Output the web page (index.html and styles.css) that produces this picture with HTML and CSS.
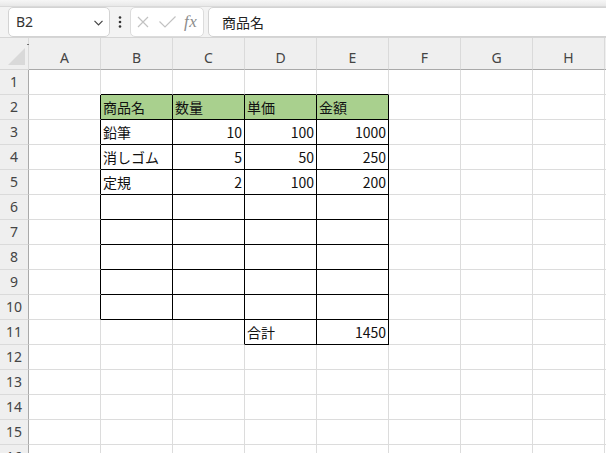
FILE: index.html
```html
<!DOCTYPE html>
<html lang="ja">
<head>
<meta charset="utf-8">
<title>Sheet</title>
<link rel="stylesheet" href="styles.css">
</head>
<body>
<div class="app">
  <div class="topstrip"></div>
  <div class="fbar">
    <div class="namebox">
      <span class="ref">B2</span>
      <svg class="chev" width="9" height="6" viewBox="0 0 9 6"><polyline points="0.5,0.8 4.5,4.8 8.5,0.8" fill="none" stroke="#444" stroke-width="1.2"/></svg>
    </div>
    <div class="dots">
      <svg width="4" height="12" viewBox="0 0 4 12"><circle cx="2" cy="1.5" r="1.3" fill="#333"/><circle cx="2" cy="6" r="1.3" fill="#333"/><circle cx="2" cy="10.5" r="1.3" fill="#333"/></svg>
    </div>
    <div class="fxbox">
      <svg class="ico-x" width="12" height="12" viewBox="0 0 12 12"><path d="M1 1 L11 11 M11 1 L1 11" stroke="#c2c2c2" stroke-width="1.2" fill="none"/></svg>
      <svg class="ico-ok" width="17" height="12" viewBox="0 0 17 12"><polyline points="0.5,5.5 6,11 16.5,0.5" fill="none" stroke="#c2c2c2" stroke-width="1.2"/></svg>
      <span class="fx">fx</span>
    </div>
    <div class="finput">商品名</div>
  </div>
  <div class="sheet">
    <div class="corner"><svg width="28" height="31" viewBox="0 0 28 31"><polygon points="8,27 25,10 25,27" fill="#d9d9d9"/><rect x="27.5" y="6" width="1" height="1" fill="#000"/></svg></div>
    <div class="ch">A</div><div class="ch">B</div><div class="ch">C</div><div class="ch">D</div><div class="ch">E</div><div class="ch">F</div><div class="ch">G</div><div class="ch">H</div><div class="ch"></div>

    <div class="rh">1</div>
    <div class="c"></div><div class="c bb"></div><div class="c bb"></div><div class="c bb"></div><div class="c bb"></div><div class="c"></div><div class="c"></div><div class="c"></div><div class="c"></div>

    <div class="rh">2</div>
    <div class="c br"></div><div class="c h br bb t">商品名</div><div class="c h br bb t">数量</div><div class="c h br bb t">単価</div><div class="c h br bb t">金額</div><div class="c"></div><div class="c"></div><div class="c"></div><div class="c"></div>

    <div class="rh">3</div>
    <div class="c br"></div><div class="c br bb t">鉛筆</div><div class="c br bb n">10</div><div class="c br bb n">100</div><div class="c br bb n">1000</div><div class="c"></div><div class="c"></div><div class="c"></div><div class="c"></div>

    <div class="rh">4</div>
    <div class="c br"></div><div class="c br bb t">消しゴム</div><div class="c br bb n">5</div><div class="c br bb n">50</div><div class="c br bb n">250</div><div class="c"></div><div class="c"></div><div class="c"></div><div class="c"></div>

    <div class="rh">5</div>
    <div class="c br"></div><div class="c br bb t">定規</div><div class="c br bb n">2</div><div class="c br bb n">100</div><div class="c br bb n">200</div><div class="c"></div><div class="c"></div><div class="c"></div><div class="c"></div>

    <div class="rh">6</div>
    <div class="c br"></div><div class="c br bb"></div><div class="c br bb"></div><div class="c br bb"></div><div class="c br bb"></div><div class="c"></div><div class="c"></div><div class="c"></div><div class="c"></div>

    <div class="rh">7</div>
    <div class="c br"></div><div class="c br bb"></div><div class="c br bb"></div><div class="c br bb"></div><div class="c br bb"></div><div class="c"></div><div class="c"></div><div class="c"></div><div class="c"></div>

    <div class="rh">8</div>
    <div class="c br"></div><div class="c br bb"></div><div class="c br bb"></div><div class="c br bb"></div><div class="c br bb"></div><div class="c"></div><div class="c"></div><div class="c"></div><div class="c"></div>

    <div class="rh">9</div>
    <div class="c br"></div><div class="c br bb"></div><div class="c br bb"></div><div class="c br bb"></div><div class="c br bb"></div><div class="c"></div><div class="c"></div><div class="c"></div><div class="c"></div>

    <div class="rh">10</div>
    <div class="c br"></div><div class="c br bb"></div><div class="c br bb"></div><div class="c br bb"></div><div class="c br bb"></div><div class="c"></div><div class="c"></div><div class="c"></div><div class="c"></div>

    <div class="rh">11</div>
    <div class="c"></div><div class="c"></div><div class="c br"></div><div class="c br bb t">合計</div><div class="c br bb n">1450</div><div class="c"></div><div class="c"></div><div class="c"></div><div class="c"></div>

    <div class="rh">12</div>
    <div class="c"></div><div class="c"></div><div class="c"></div><div class="c"></div><div class="c"></div><div class="c"></div><div class="c"></div><div class="c"></div><div class="c"></div>

    <div class="rh">13</div>
    <div class="c"></div><div class="c"></div><div class="c"></div><div class="c"></div><div class="c"></div><div class="c"></div><div class="c"></div><div class="c"></div><div class="c"></div>

    <div class="rh">14</div>
    <div class="c"></div><div class="c"></div><div class="c"></div><div class="c"></div><div class="c"></div><div class="c"></div><div class="c"></div><div class="c"></div><div class="c"></div>

    <div class="rh">15</div>
    <div class="c"></div><div class="c"></div><div class="c"></div><div class="c"></div><div class="c"></div><div class="c"></div><div class="c"></div><div class="c"></div><div class="c"></div>

    <div class="rh">16</div>
    <div class="c"></div><div class="c"></div><div class="c"></div><div class="c"></div><div class="c"></div><div class="c"></div><div class="c"></div><div class="c"></div><div class="c"></div>
  </div>
</div>
</body>
</html>
```
FILE: styles.css
```css
html, body {
  margin: 0;
  padding: 0;
  background: #fff;
  overflow: hidden;
}
body {
  width: 606px;
  height: 453px;
  font-family: "Noto Sans", "Noto Sans CJK JP", sans-serif;
  color: #222;
}
.app {
  width: 606px;
  height: 453px;
  overflow: hidden;
}
.topstrip {
  height: 6px;
  background: linear-gradient(#f6f6f6, #e8e8e8);
  border-bottom: 1px solid #d9d9d9;
}
.fbar {
  display: flex;
  height: 30px;
  background: #f3f3f3;
  border-bottom: 1px solid #d5d5d5;
}
.namebox {
  margin-left: 8px;
  width: 102px;
  box-sizing: border-box;
  border: 1px solid #d3d3d3;
  border-radius: 5px;
  background: #fff;
  display: flex;
  align-items: center;
  justify-content: space-between;
  padding: 0 6px 0 7px;
}
.ref {
  font-size: 14px;
  color: #333;
  line-height: 16px;
}
.chev {
  display: block;
  margin-top: 1px;
}
.dots {
  width: 20px;
  display: flex;
  align-items: center;
  justify-content: center;
}
.dots svg { display: block; }
.fxbox {
  width: 74px;
  box-sizing: border-box;
  border: 1px solid #dcdcdc;
  border-radius: 5px;
  background: #fff;
  display: flex;
  align-items: center;
  padding-left: 6px;
}
.ico-x { display: block; }
.ico-ok { display: block; margin-left: 10px; }
.fx {
  margin-left: 8px;
  font-family: "Liberation Serif", serif;
  font-style: italic;
  font-size: 17px;
  color: #8c8c8c;
  letter-spacing: 0.5px;
  line-height: 16px;
}
.finput {
  flex: 1;
  margin-left: 4px;
  margin-right: -10px;
  box-sizing: border-box;
  border: 1px solid #d3d3d3;
  border-radius: 5px;
  background: #fff;
  display: flex;
  align-items: center;
  padding-left: 13px;
  font-family: "Noto Sans CJK JP", sans-serif;
  font-size: 14px;
  color: #222;
}
.sheet {
  display: grid;
  grid-template-columns: 29px repeat(9, 72px);
  grid-template-rows: 32px repeat(16, 25px);
}
.corner {
  box-sizing: border-box;
  background: #efefef;
  border-right: 1px solid #dadada;
  border-bottom: 1px solid #d6d6d6;
}
.corner svg { display: block; overflow: visible; }
.ch {
  box-sizing: border-box;
  background: #efefef;
  border-right: 1px solid #dadada;
  border-bottom: 1px solid #a9a9a9;
  display: flex;
  align-items: flex-end;
  justify-content: center;
  padding-bottom: 3px;
  font-size: 14px;
  line-height: 16px;
  color: #444;
}
.rh {
  box-sizing: border-box;
  background: #efefef;
  border-right: 1px solid #a9a9a9;
  border-bottom: 1px solid #dadada;
  text-align: center;
  font-size: 14px;
  line-height: 24px;
  color: #444;
}
.c {
  box-sizing: border-box;
  border-right: 1px solid #dcdcdc;
  border-bottom: 1px solid #dcdcdc;
  font-family: "Noto Sans CJK JP", sans-serif;
  font-size: 14px;
  line-height: 24px;
  color: #111;
  white-space: nowrap;
  overflow: hidden;
}
.c.br { border-right-color: #000; }
.c.bb { border-bottom-color: #000; }
.c.h { background: #a9d08e; }
.c.t { padding-left: 2px; }
.c.n { text-align: right; padding-right: 2px; }
```
